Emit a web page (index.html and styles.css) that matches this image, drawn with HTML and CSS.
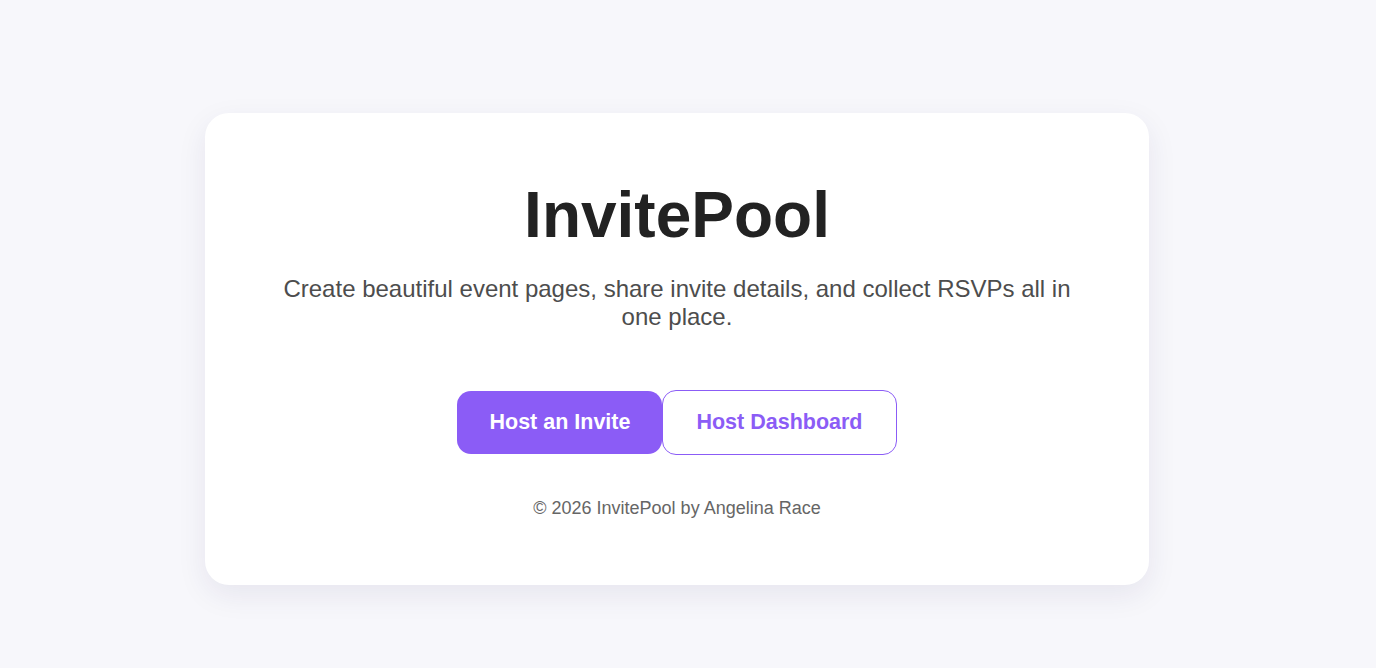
FILE: index.html
```html
<!DOCTYPE html>
<html lang="en">
<head>
<meta charset="utf-8">
<title>InvitePool</title>
<link rel="stylesheet" href="styles.css">
</head>
<body>
<main class="page">
  <section class="card">
    <h1 class="title">InvitePool</h1>
    <p class="subtitle">Create beautiful event pages, share invite details, and collect RSVPs all in one place.</p>
    <div class="actions">
      <a class="btn btn-primary" href="#">Host an Invite</a>
      <a class="btn btn-outline" href="#">Host Dashboard</a>
    </div>
    <p class="footer">© 2026 InvitePool by Angelina Race</p>
  </section>
</main>
</body>
</html>
```
FILE: styles.css
```css
* { box-sizing: border-box; }
html, body {
  margin: 0;
  padding: 0;
  height: 100%;
}
body {
  background: #f7f7fb;
  font-family: "Liberation Sans", Arial, sans-serif;
  color: #222;
}
.page {
  min-height: 100%;
  display: flex;
  align-items: center;
  justify-content: center;
  padding: 30px 22px 0 0;
}
.card {
  width: 944px;
  background: #fff;
  border-radius: 24px;
  box-shadow: 0 10px 30px rgba(40, 30, 90, 0.08);
  padding: 66px 64px 66px;
  text-align: center;
}
.title {
  margin: 0;
  font-size: 64px;
  font-weight: 700;
  line-height: 1.15;
  color: #222;
}
.subtitle {
  margin: 22px 0 0;
  font-size: 24px;
  line-height: 28.8px;
  color: #4d4d4d;
}
.actions {
  margin-top: 58px;
  display: flex;
  justify-content: center;
  align-items: center;
}
.btn {
  display: inline-block;
  font-size: 21.5px;
  font-weight: 700;
  line-height: 25px;
  text-decoration: none;
  border-radius: 14px;
}
.btn-primary {
  background: #8b5cf6;
  color: #fff;
  padding: 19px 32px;
}
.btn-outline {
  background: #fff;
  color: #8b5cf6;
  border: 1px solid #8b5cf6;
  padding: 19px 33px;
}
.footer {
  margin: 43px 0 0;
  font-size: 18px;
  line-height: 21px;
  color: #666;
}
```
